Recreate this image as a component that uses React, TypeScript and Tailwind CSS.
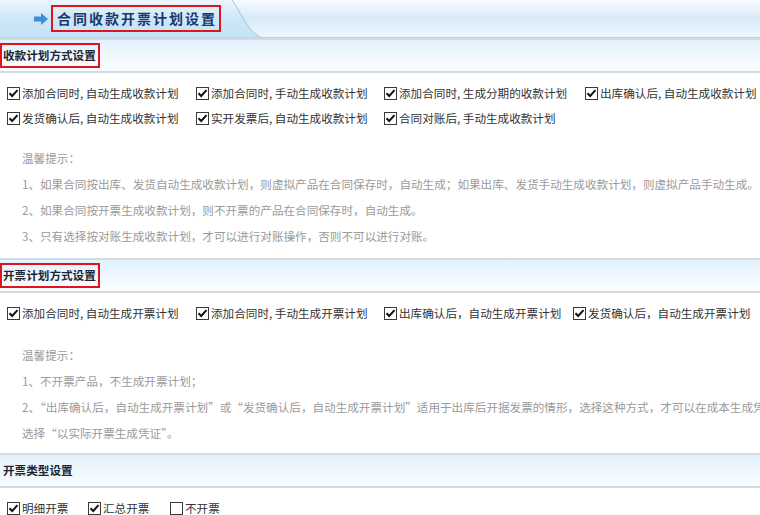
import React from 'react';

const FONT = { fontFamily: '"Noto Sans CJK SC", "Noto Sans", sans-serif' };

function Box({ checked }: { checked: boolean }) {
  return (
    <svg width="13" height="13" viewBox="0 0 13 13" className="shrink-0">
      <rect x="0.5" y="0.5" width="12" height="12" fill="#fff" stroke="#3a3a3a" />
      {checked && (
        <path d="M2.5 6.2 L5.2 9 L10.5 3.2" fill="none" stroke="#111" strokeWidth="2" />
      )}
    </svg>
  );
}

function Check({ label, checked = true, width }: { label: string; checked?: boolean; width: string }) {
  return (
    <label className={`flex items-center gap-[2px] text-[11.6px] text-[#333] ${width}`}>
      <Box checked={checked} />
      <span className="whitespace-nowrap">{label}</span>
    </label>
  );
}

function SectionHeader({ title, boxed = true }: { title: string; boxed?: boolean }) {
  return (
    <div className="h-[35px] border-y-2 border-[#d3dbe0] bg-gradient-to-b from-[#e2f1fd] to-[#fafdff] flex items-center">
      <div
        className={`h-[25px] flex items-center pl-[1px] pr-[2px] text-[11.6px] font-bold text-[#1e2630] ${
          boxed ? 'border-2 border-[#e0141a]' : 'border-2 border-transparent'
        }`}
      >
        {title}
      </div>
    </div>
  );
}

function Hints({ lines }: { lines: string[] }) {
  return (
    <div className="pl-[22px] text-[11.6px] text-[#9a9a9a] leading-[26px]">
      <div>温馨提示：</div>
      {lines.map((l, i) => (
        <div key={i} className="whitespace-nowrap">{l}</div>
      ))}
    </div>
  );
}

export default function App() {
  return (
    <div className="w-[760px] h-[515px] overflow-hidden bg-white" style={FONT}>
      {/* Title bar */}
      <div className="h-[38px] flex border-b border-[#c4d2dc] bg-gradient-to-b from-[#f7fbff] via-[#d8eaf7] to-[#edf6fd]">
        <div className="w-[232px] flex items-center bg-gradient-to-b from-[#edf6fe] via-[#cfe6f8] to-[#c4e2f7]">
          <svg width="14" height="12" viewBox="0 0 14 12" className="ml-[34px] mr-[3px]">
            <path d="M0 3.5 H7 V0 L14 6 L7 12 V8.5 H0 Z" fill="#3d8fd8" />
          </svg>
          <div className="h-[27px] flex items-center pl-[4px] pr-[2px] border-2 border-[#e0141a] text-[14px] font-bold tracking-[2px] text-[#17396b]">
            合同收款开票计划设置
          </div>
        </div>
        <svg width="28" height="37" viewBox="0 0 28 37" className="shrink-0">
          <defs>
            <linearGradient id="tg" x1="0" y1="0" x2="0" y2="1">
              <stop offset="0" stopColor="#edf6fe" />
              <stop offset="0.5" stopColor="#cfe6f8" />
              <stop offset="1" stopColor="#c4e2f7" />
            </linearGradient>
          </defs>
          <path d="M0 0 C8 10 14 30 28 37 L0 37 Z" fill="url(#tg)" />
          <path d="M0 0 C8 10 14 30 28 37" fill="none" stroke="#9fc3dc" strokeWidth="1" />
        </svg>
      </div>

      <SectionHeader title="收款计划方式设置" />

      <div className="pt-[8px] pl-[7px]">
        <div className="h-[25px] flex items-center">
          <Check width="w-[189px]" label="添加合同时, 自动生成收款计划" />
          <Check width="w-[188px]" label="添加合同时, 手动生成收款计划" />
          <Check width="w-[201px]" label="添加合同时, 生成分期的收款计划" />
          <Check width="w-[170px]" label="出库确认后, 自动生成收款计划" />
        </div>
        <div className="h-[25px] flex items-center">
          <Check width="w-[189px]" label="发货确认后, 自动生成收款计划" />
          <Check width="w-[188px]" label="实开发票后, 自动生成收款计划" />
          <Check width="w-[201px]" label="合同对账后, 手动生成收款计划" />
        </div>
      </div>

      <div className="mt-[14px] mb-[9px]">
        <Hints
          lines={[
            '1、如果合同按出库、发货自动生成收款计划，则虚拟产品在合同保存时，自动生成；如果出库、发货手动生成收款计划，则虚拟产品手动生成。',
            '2、如果合同按开票生成收款计划，则不开票的产品在合同保存时，自动生成。',
            '3、只有选择按对账生成收款计划，才可以进行对账操作，否则不可以进行对账。',
          ]}
        />
      </div>

      <SectionHeader title="开票计划方式设置" />

      <div className="pt-[8px] pl-[7px]">
        <div className="h-[25px] flex items-center">
          <Check width="w-[189px]" label="添加合同时, 自动生成开票计划" />
          <Check width="w-[188px]" label="添加合同时, 手动生成开票计划" />
          <Check width="w-[189px]" label="出库确认后，自动生成开票计划" />
          <Check width="w-[180px]" label="发货确认后，自动生成开票计划" />
        </div>
      </div>

      <div className="mt-[16px] mb-[7px]">
        <Hints
          lines={[
            '1、不开票产品，不生成开票计划；',
            '2、“出库确认后，自动生成开票计划”或“发货确认后，自动生成开票计划”适用于出库后开据发票的情形，选择这种方式，才可以在成本生成凭证时',
            '选择“以实际开票生成凭证”。',
          ]}
        />
      </div>

      <SectionHeader title="开票类型设置" boxed={false} />

      <div className="pt-[8px] pl-[7px]">
        <div className="h-[25px] flex items-center">
          <Check width="w-[81px]" label="明细开票" />
          <Check width="w-[82px]" label="汇总开票" />
          <Check width="w-[80px]" label="不开票" checked={false} />
        </div>
      </div>
    </div>
  );
}
